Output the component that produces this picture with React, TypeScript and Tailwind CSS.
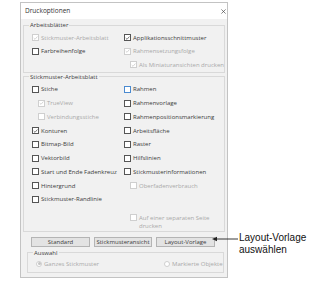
import React from 'react';

type BoxProps = { checked?: boolean; disabled?: boolean; focus?: boolean };

function Box({ checked, disabled, focus }: BoxProps) {
  const border = focus ? 'border-[#4a8ad0]' : disabled ? 'border-[#cfcfcf]' : 'border-[#555]';
  return (
    <span className={`flex h-[7px] w-[7px] shrink-0 items-center justify-center border bg-white ${border}`}>
      {checked && (
        <svg viewBox="0 0 7 7" className="h-[6px] w-[6px]">
          <path d="M1 3.6 L2.8 5.4 L6.2 1.4" fill="none" stroke={disabled ? '#bdbdbd' : '#333'} strokeWidth="0.9" />
        </svg>
      )}
    </span>
  );
}

type CheckProps = BoxProps & { label: React.ReactNode; indent?: boolean; tight?: boolean };

function Check({ label, checked, disabled, focus, indent, tight }: CheckProps) {
  return (
    <div className={`flex items-center gap-[2px] ${tight ? 'h-[13.5px]' : 'h-[13.75px]'} ${indent ? 'pl-[6px]' : ''}`}>
      <Box checked={checked} disabled={disabled} focus={focus} />
      <span className={`whitespace-nowrap ${disabled ? 'text-[#a9a9a9]' : 'text-[#3c3c3c]'}`}>{label}</span>
    </div>
  );
}

function Radio({ label, selected }: { label: string; selected?: boolean }) {
  return (
    <div className="flex h-[10px] items-center gap-[2px]">
      <span className="flex h-[6px] w-[6px] items-center justify-center rounded-full border border-[#cfcfcf] bg-white">
        {selected && <span className="h-[3px] w-[3px] rounded-full bg-[#c4c4c4]" />}
      </span>
      <span className="whitespace-nowrap text-[#a9a9a9]">{label}</span>
    </div>
  );
}

function Button({ children, w }: { children: string; w: string }) {
  return (
    <div className={`flex h-[10px] items-center justify-center border border-[#b4b4b4] bg-[#e3e3e3] text-[#3c3c3c] ${w}`}>
      {children}
    </div>
  );
}

export default function App() {
  return (
    <div className="flex h-[289px] w-[323px] items-start bg-white" style={{ fontFamily: '"Open Sans", "Noto Sans", sans-serif' }}>
      <div className="ml-[20px] mt-[2px] flex w-[208px] flex-col border border-[#c3c3c3] bg-[#f1f1f1] text-[6px] leading-[8px]">
        {/* title bar */}
        <div className="flex h-[16px] items-center justify-between bg-white pl-[4px] pr-[1px]">
          <span className="text-[6.5px] text-[#333]">Druckoptionen</span>
          <svg viewBox="0 0 6 6" className="h-[5px] w-[5px]">
            <path d="M0.5 0.5 L5.5 5.5 M5.5 0.5 L0.5 5.5" stroke="#444" strokeWidth="0.8" />
          </svg>
        </div>

        {/* Arbeitsblätter */}
        <fieldset className="mx-[2px] mt-[2px] border border-[#d9d9d9]">
          <legend className="ml-[5px] px-[1px] text-[#3c3c3c]">Arbeitsblätter</legend>
          <div className="grid grid-cols-[92px_1fr] pl-[8px] pt-[2px]">
            <div className="flex flex-col">
              <Check tight checked disabled label="Stickmuster-Arbeitsblatt" />
              <Check tight label="Farbreihenfolge" />
            </div>
            <div className="flex flex-col">
              <Check tight checked label="Applikationsschnittmuster" />
              <Check tight checked disabled label="Rahmensetzungsfolge" />
              <Check tight checked disabled indent label="Als Miniaturansichten drucken" />
            </div>
          </div>
        </fieldset>

        {/* Stickmuster-Arbeitsblatt */}
        <fieldset className="mx-[2px] border border-[#d9d9d9]">
          <legend className="ml-[5px] px-[1px] text-[#3c3c3c]">Stickmuster-Arbeitsblatt</legend>
          <div className="grid grid-cols-[92px_1fr] pb-[1px] pl-[8px] pt-[2px]">
            <div className="flex flex-col">
              <Check label="Stiche" />
              <Check checked disabled indent label="TrueView" />
              <Check disabled indent label="Verbindungsstiche" />
              <Check checked label="Konturen" />
              <Check label="Bitmap-Bild" />
              <Check label="Vektorbild" />
              <Check label="Start und Ende Fadenkreuz" />
              <Check label="Hintergrund" />
              <Check label="Stickmuster-Randlinie" />
            </div>
            <div className="flex flex-col">
              <Check focus label="Rahmen" />
              <Check label="Rahmenvorlage" />
              <Check label="Rahmenpositionsmarkierung" />
              <Check label="Arbeitsfläche" />
              <Check label="Raster" />
              <Check label="Hilfslinien" />
              <Check label="Stickmusterinformationen" />
              <Check disabled indent label="Oberfadenverbrauch" />
              <div className="mt-[21px] flex items-start gap-[2px] pl-[6px]">
                <span className="mt-[0.5px]">
                  <Box disabled />
                </span>
                <span className="text-[#a9a9a9]">
                  Auf einer separaten Seite
                  <br />
                  drucken
                </span>
              </div>
            </div>
          </div>
        </fieldset>

        {/* buttons */}
        <div className="ml-[10px] mt-[5px] flex gap-[4px]">
          <Button w="w-[59px]">Standard</Button>
          <Button w="w-[58px]">Stickmusteransicht</Button>
          <Button w="w-[59px]">Layout-Vorlage</Button>
        </div>

        {/* Auswahl */}
        <fieldset className="mb-[4px] ml-[6px] mr-[4px] mt-[2px] border border-[#d9d9d9]">
          <legend className="ml-[5px] px-[1px] text-[#3c3c3c]">Auswahl</legend>
          <div className="grid grid-cols-[128px_1fr] pb-[3px] pl-[8px] pt-[2px]">
            <Radio selected label="Ganzes Stickmuster" />
            <Radio label="Markierte Objekte" />
          </div>
        </fieldset>
      </div>

      {/* annotation */}
      <div
        className="relative ml-[11px] mt-[232px] text-[10px] leading-[12px] text-[#111]"
        style={{ fontFamily: '"Liberation Sans", Arial, sans-serif' }}
      >
        <svg viewBox="0 0 26 6" className="absolute left-[-27px] top-[4px] h-[6px] w-[26px]">
          <path d="M0 3 L5 0.8 L5 5.2 Z" fill="#222" />
          <path d="M4 3 L26 3" stroke="#222" strokeWidth="0.9" />
        </svg>
        <div>Layout-Vorlage</div>
        <div>auswählen</div>
      </div>
    </div>
  );
}
